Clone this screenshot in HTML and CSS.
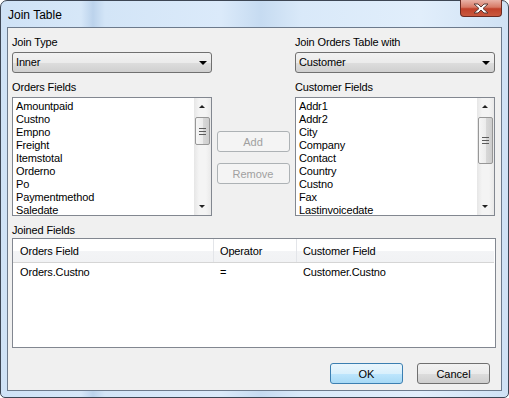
FILE: index.html
```html
<!DOCTYPE html>
<html>
<head>
    <meta charset="UTF-8">
    <title>Join Table</title>
    <link rel="stylesheet" href="styles.css">
</head>
<body>

    <div class="window">
        <!-- Title bar -->
        <div class="titlebar">
            <span class="title">Join Table</span>
            <button class="close-btn" title="Close">
                <svg width="18" height="11" viewBox="0 0 18 11">
                    <path d="M2 1 L6 1 L9 4 L12 1 L16 1 L11 5.5 L16 10 L12 10 L9 7 L6 10 L2 10 L7 5.5 Z" fill="#fff" stroke="#5a3a36" stroke-width="1" stroke-linejoin="round"/>
                </svg>
            </button>
        </div>

        <div class="client">
            <div class="top">
                <!-- Left side -->
                <div class="col">
                    <div class="label">Join Type</div>
                    <div class="combo">Inner<span class="arrow"></span></div>
                    <div class="label gap">Orders Fields</div>
                    <div class="listbox">
                        <ul>
                            <li>Amountpaid</li>
                            <li>Custno</li>
                            <li>Empno</li>
                            <li>Freight</li>
                            <li>Itemstotal</li>
                            <li>Orderno</li>
                            <li>Po</li>
                            <li>Paymentmethod</li>
                            <li>Saledate</li>
                        </ul>
                        <div class="vscroll">
                            <span class="up"></span>
                            <span class="thumb short"><i></i></span>
                            <span class="down"></span>
                        </div>
                    </div>
                </div>

                <!-- Add / Remove -->
                <div class="mid">
                    <button class="btn" disabled>Add</button>
                    <button class="btn" disabled>Remove</button>
                </div>

                <!-- Right side -->
                <div class="col">
                    <div class="label">Join Orders Table with</div>
                    <div class="combo">Customer<span class="arrow"></span></div>
                    <div class="label gap">Customer Fields</div>
                    <div class="listbox">
                        <ul>
                            <li>Addr1</li>
                            <li>Addr2</li>
                            <li>City</li>
                            <li>Company</li>
                            <li>Contact</li>
                            <li>Country</li>
                            <li>Custno</li>
                            <li>Fax</li>
                            <li>Lastinvoicedate</li>
                        </ul>
                        <div class="vscroll">
                            <span class="up"></span>
                            <span class="thumb long"><i></i></span>
                            <span class="down"></span>
                        </div>
                    </div>
                </div>
            </div>

            <div class="label gap joined">Joined Fields</div>
            <div class="grid">
                <div class="grid-row head">
                    <div class="cell c1">Orders Field</div>
                    <div class="cell c2">Operator</div>
                    <div class="cell c3">Customer Field</div>
                </div>
                <div class="grid-row">
                    <div class="cell c1">Orders.Custno</div>
                    <div class="cell c2">=</div>
                    <div class="cell c3">Customer.Custno</div>
                </div>
            </div>

            <div class="actions">
                <button class="btn default">OK</button>
                <button class="btn">Cancel</button>
            </div>
        </div>
    </div>

</body>
</html>
```

FILE: styles.css
```css
body {
    margin: 0;
    padding: 0;
    font-family: 'Liberation Sans', Arial, sans-serif;
    font-size: 11px;
    letter-spacing: -0.15px;
    color: #000;
    background: #fff;
}
.window {
    box-sizing: border-box;
    width: 509px;
    height: 398px;
    border: 1px solid #3d4654;
    border-radius: 7px 7px 5px 5px;
    padding: 0 6px 6px 6px;
    background: linear-gradient(90deg, #cfe2f6 0px, #d6e7f8 80px, #bcd3ec 92px, #d3e5f7 104px, #dbeafa 220px, #c6dbf1 260px, #d9e9f9 300px, #e1eefb 420px, #cfe1f4 509px);
    display: flex;
    flex-direction: column;
}
.titlebar {
    height: 26px;
    display: flex;
    justify-content: space-between;
    align-items: flex-start;
}
.title {
    font-size: 12px;
    letter-spacing: 0;
    padding: 7px 0 0 1px;
}
.close-btn {
    width: 42px;
    height: 17px;
    margin-top: -1px;
    padding: 0;
    border: 1px solid #6b2a22;
    border-top: none;
    border-radius: 0 0 4px 4px;
    background: linear-gradient(#e9b2a7 0%, #d77a66 45%, #c0412a 55%, #c9593f 100%);
    display: flex;
    align-items: center;
    justify-content: center;
}
.client {
    flex: 1;
    border: 1px solid #6c7a8c;
    background: #f0f0f0;
    padding: 8px 6px 0 4px;
}
.top {
    display: flex;
}
.col {
    width: 200px;
}
.label {
    line-height: 13px;
    margin-bottom: 3px;
}
.label.gap {
    margin-top: 8px;
}
.label.joined {
    margin-bottom: 1px;
}
.combo {
    box-sizing: border-box;
    height: 21px;
    border: 1px solid #707070;
    border-radius: 3px;
    background: linear-gradient(#f2f2f2 0%, #ebebeb 50%, #dddddd 51%, #cfcfcf 100%);
    padding: 3px 0 0 3px;
    position: relative;
}
.combo .arrow {
    position: absolute;
    right: 4px;
    top: 8px;
    border-left: 4px solid transparent;
    border-right: 4px solid transparent;
    border-top: 4px solid #000;
}
.listbox {
    box-sizing: border-box;
    height: 119px;
    border: 1px solid #828790;
    background: #fff;
    display: flex;
}
.listbox ul {
    flex: 1;
    list-style: none;
    margin: 0;
    padding: 2px 0 0 3px;
    overflow: hidden;
}
.listbox li {
    line-height: 13px;
}
.vscroll {
    width: 17px;
    background: linear-gradient(90deg, #e6e6e6, #f4f4f4 30%, #f4f4f4 70%, #e9e9e9);
    display: flex;
    flex-direction: column;
    align-items: center;
}
.vscroll .up, .vscroll .down {
    height: 17px;
    width: 17px;
    position: relative;
}
.vscroll .up::after, .vscroll .down::after {
    content: "";
    position: absolute;
    left: 5px;
    border-left: 3px solid transparent;
    border-right: 3px solid transparent;
}
.vscroll .up::after {
    top: 7px;
    border-bottom: 3px solid #222;
}
.vscroll .down::after {
    top: 7px;
    border-top: 3px solid #222;
}
.vscroll .down {
    margin-top: auto;
}
.thumb {
    box-sizing: border-box;
    width: 15px;
    margin-top: 2px;
    border: 1px solid #979797;
    border-radius: 2px;
    background: linear-gradient(90deg, #f6f6f6 0%, #ececec 50%, #d9d9d9 51%, #cdcdcd 100%);
    display: flex;
    align-items: center;
    justify-content: center;
}
.thumb.short {
    height: 28px;
}
.thumb.long {
    height: 47px;
}
.thumb i {
    width: 7px;
    height: 7px;
    background: repeating-linear-gradient(#5c5c5c 0 1px, transparent 1px 3px);
}
.mid {
    width: 83px;
    padding-top: 95px;
    display: flex;
    flex-direction: column;
    align-items: center;
    gap: 11px;
}
.btn {
    box-sizing: border-box;
    width: 73px;
    height: 21px;
    padding: 0;
    font-family: inherit;
    font-size: 11px;
    color: #000;
    border: 1px solid #707070;
    border-radius: 3px;
    background: linear-gradient(#f2f2f2 0%, #ebebeb 50%, #dddddd 51%, #cfcfcf 100%);
}
.mid .btn {
    margin-left: -1px;
}
.btn:disabled {
    color: #a0a0a0;
    border-color: #adb2b5;
    background: #f4f4f4;
}
.btn.default {
    border-color: #3c7fb1;
    background: linear-gradient(#eaf6fd 0%, #d9f0fc 50%, #bee6fd 51%, #a7d9f5 100%);
}
.grid {
    box-sizing: border-box;
    width: 484px;
    height: 110px;
    border: 1px solid #828790;
    background: #fff;
}
.grid-row {
    display: flex;
    height: 18px;
    align-items: center;
}
.grid-row.head {
    height: 23px;
    border-bottom: 1px solid #d5d5d5;
    background: linear-gradient(#ffffff 0%, #ffffff 50%, #f3f4f6 51%, #f1f2f4 100%);
    margin-right: 1px;
}
.cell {
    box-sizing: border-box;
    padding-left: 6px;
    height: 100%;
    display: flex;
    align-items: center;
}
.cell.c1 {
    width: 201px;
    padding-left: 7px;
}
.cell.c2 {
    width: 83px;
}
.cell.c3 {
    flex: 1;
}
.head .cell.c1, .head .cell.c2 {
    border-right: 1px solid #e3e5e9;
}
.actions {
    display: flex;
    justify-content: flex-end;
    gap: 14px;
    margin: 15px 5px 0 0;
}
```
